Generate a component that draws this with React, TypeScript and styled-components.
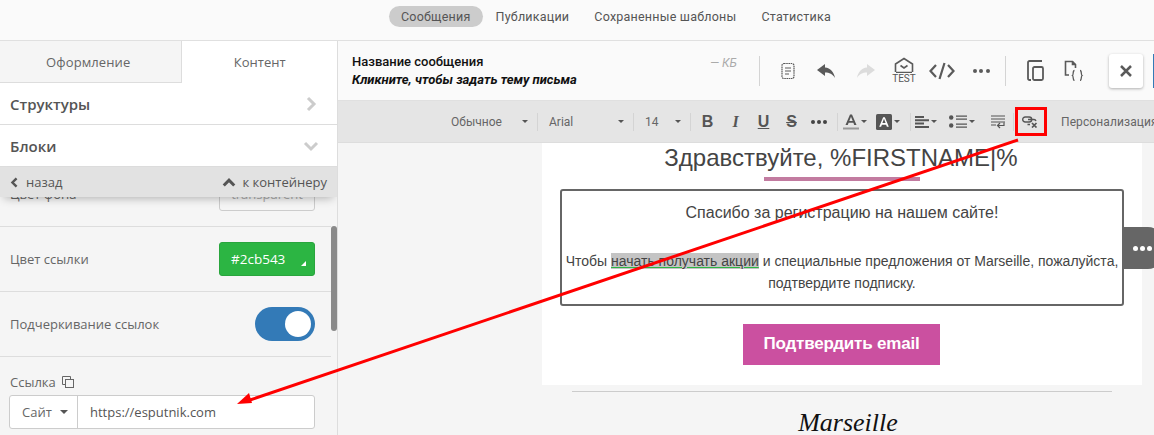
import React from "react";
import styled, { createGlobalStyle } from "styled-components";

const Global = createGlobalStyle`
  html, body { margin: 0; padding: 0; height: 100%; overflow: hidden; background: #fafafa; }
  #root { height: 435px; }
  * { box-sizing: border-box; }
`;

const Page = styled.div`
  position: relative;
  width: 1154px;
  height: 435px;
  overflow: hidden;
  display: flex;
  flex-direction: column;
  font-family: "Open Sans", sans-serif;
  color: #555;
`;

const Nav = styled.nav`
  height: 41px;
  flex: none;
  display: flex;
  align-items: flex-start;
  padding: 6px 0 0 389px;
  gap: 1px;
  background: #fafafa;
  border-bottom: 1px solid #e0e0e0;
  font-family: Roboto, sans-serif;
  font-size: 12.5px;
`;

const NavItem = styled.div<{ $active?: boolean }>`
  height: 21px;
  line-height: 21px;
  padding: 0 12px;
  border-radius: 11px;
  color: #555;
  letter-spacing: 0.22px;
  background: ${(p) => (p.$active ? "#cccccc" : "transparent")};
`;

const Main = styled.div`
  flex: 1;
  min-height: 0;
  display: flex;
`;

const Sidebar = styled.aside`
  position: relative;
  width: 338px;
  flex: none;
  display: flex;
  flex-direction: column;
  overflow: hidden;
  background: #f5f5f5;
  border-right: 1px solid #ddd;
`;

const Tabs = styled.div`
  height: 42px;
  flex: none;
  display: flex;
  background: #fff;
`;

const Tab = styled.div<{ $active?: boolean }>`
  width: ${(p) => (p.$active ? "155px" : "183px")};
  display: flex;
  align-items: center;
  justify-content: center;
  font-size: 13px;
  color: #666;
  background: ${(p) => (p.$active ? "#fff" : "#f5f5f5")};
  ${(p) => !p.$active && "border-right: 1px solid #ddd; border-bottom: 1px solid #ddd; padding-right: 5px; letter-spacing: 0.1px;"}
`;

const Section = styled.div`
  height: 42px;
  flex: none;
  display: flex;
  align-items: center;
  justify-content: space-between;
  padding: 0 18px 0 10px;
  background: #fff;
  border-bottom: 1px solid #ddd;
  font-size: 15px;
  font-weight: 600;
  color: #555;
`;

const BackBar = styled.div`
  position: relative;
  z-index: 2;
  height: 30px;
  flex: none;
  display: flex;
  align-items: center;
  justify-content: space-between;
  padding: 0 10px 0 9px;
  background: #e2e2e2;
  font-size: 13px;
  color: #555;
  box-shadow: 0 5px 10px -4px rgba(0, 0, 0, 0.3);
`;

const BackLink = styled.span`
  display: inline-flex;
  align-items: center;
  gap: 6px;
`;

const Scroll = styled.div`
  flex: 1;
  min-height: 0;
  overflow: hidden;
`;

const Row = styled.div<{ $clipped?: boolean }>`
  height: 65px;
  display: flex;
  align-items: center;
  justify-content: space-between;
  padding: 0 16px 0 10px;
  width: 331px;
  border-bottom: 1px solid #ddd;
  font-size: 13px;
  color: #666;
  ${(p) => p.$clipped && "margin-top: -35px;"}
`;

const GhostSwatch = styled.div`
  width: 96px;
  height: 34px;
  border: 1px solid #ccc;
  border-radius: 3px;
  font-size: 13px;
  color: #aaa;
  text-align: center;
  line-height: 32px;
`;

const Swatch = styled.div`
  position: relative;
  width: 96px;
  height: 34px;
  padding-left: 11px;
  background: #2cb543;
  border: 1px solid #29a53d;
  border-radius: 3px;
  color: #fff;
  font-size: 13.5px;
  font-weight: 500;
  line-height: 32px;
  &::after {
    content: "";
    position: absolute;
    right: 8px;
    bottom: 9px;
    border-style: solid;
    border-width: 0 0 5px 5px;
    border-color: transparent transparent #fff transparent;
  }
`;

const Toggle = styled.div`
  width: 60px;
  height: 34px;
  padding: 4px;
  display: flex;
  justify-content: flex-end;
  border-radius: 17px;
  background: #337ab7;
`;

const Knob = styled.div`
  width: 26px;
  height: 26px;
  border-radius: 50%;
  background: #fff;
`;

const LinkBlock = styled.div`
  padding: 16px 0 0 9px;
  font-size: 13px;
  color: #666;
`;

const LinkLabel = styled.div`
  display: flex;
  align-items: center;
  gap: 5px;
  height: 18px;
  margin: 0 0 4px 1px;
`;

const InputGroup = styled.div`
  width: 306px;
  height: 34px;
  display: flex;
  background: #fff;
  border: 1px solid #ccc;
  border-radius: 3px;
  font-size: 13px;
`;

const SiteSelect = styled.div`
  width: 68px;
  flex: none;
  display: flex;
  align-items: center;
  gap: 8px;
  padding-left: 12px;
  border-right: 1px solid #ccc;
  color: #666;
`;

const UrlText = styled.div`
  padding-left: 12px;
  line-height: 32px;
  color: #555;
`;

const Caret = styled.span<{ $color?: string; $size?: number }>`
  display: inline-block;
  flex: none;
  border-style: solid;
  border-width: ${(p) => p.$size ?? 3}px ${(p) => p.$size ?? 3}px 0;
  border-color: ${(p) => p.$color ?? "#555"} transparent transparent;
`;

const Thumb = styled.div`
  position: absolute;
  right: 0;
  top: 185px;
  width: 6px;
  height: 105px;
  border-radius: 3px;
  background: #8a8a8a;
`;

const Editor = styled.section`
  flex: 1;
  min-width: 0;
  display: flex;
  flex-direction: column;
`;

const Header = styled.div`
  height: 60px;
  flex: none;
  display: flex;
  align-items: center;
  background: #fafafa;
  border-bottom: 1px solid #e0e0e0;
  padding-left: 14px;
  font-family: Roboto, sans-serif;
`;

const TitleCol = styled.div`
  width: 385px;
  flex: none;
  font-size: 13px;
  line-height: 18px;
  font-weight: 500;
  color: #111;
`;

const Subject = styled.div`
  font-style: italic;
  font-weight: 700;
`;

const Kb = styled.div`
  width: 42px;
  margin: 0 0 15px -42px;
  flex: none;
  font-size: 12px;
  font-style: italic;
  text-align: right;
  color: #aaa;
`;

const HeaderIcons = styled.div`
  margin-left: 22px;
  display: flex;
  align-items: center;
  height: 30px;
`;

const VSep = styled.div<{ $h?: number; $m?: string }>`
  width: 1px;
  height: ${(p) => p.$h ?? 30}px;
  flex: none;
  margin: ${(p) => p.$m ?? "0"};
  background: #d4d4d4;
`;

const HIcon = styled.div<{ $w: number }>`
  width: ${(p) => p.$w}px;
  height: 30px;
  flex: none;
  display: flex;
  align-items: center;
  justify-content: center;
`;

const CloseButton = styled.div`
  width: 34px;
  height: 34px;
  margin-left: 25px;
  flex: none;
  display: flex;
  align-items: center;
  justify-content: center;
  background: #fff;
  border-radius: 3px;
  box-shadow: 0 1px 3px rgba(0, 0, 0, 0.3);
`;

const BlueEdge = styled.div`
  width: 10px;
  height: 34px;
  margin-left: 10px;
  flex: none;
  background: #337ab7;
`;

const Toolbar = styled.div`
  height: 42px;
  flex: none;
  display: flex;
  align-items: center;
  padding-left: 113px;
  background: #e5e5e5;
  border-bottom: 1px solid #ddd;
  font-family: Roboto, sans-serif;
  font-size: 12px;
  color: #666;
  white-space: nowrap;
  overflow: hidden;
`;

const Drop = styled.div<{ $w: number }>`
  width: ${(p) => p.$w}px;
  flex: none;
  display: flex;
  align-items: center;
  justify-content: space-between;
  padding-right: 9px;
`;

const TIcon = styled.div<{ $w: number }>`
  width: ${(p) => p.$w}px;
  height: 20px;
  flex: none;
  display: flex;
  align-items: center;
  justify-content: center;
  gap: 2px;
`;

const Personal = styled.div`
  margin-left: 15px;
  font-size: 12px;
  letter-spacing: 0.1px;
  color: #666;
`;

const Canvas = styled.div`
  flex: 1;
  min-height: 0;
  overflow: hidden;
  position: relative;
  background: #f5f5f5;
  padding-left: 204px;
  font-family: "Liberation Sans", Arial, sans-serif;
`;

const Letter = styled.div`
  width: 600px;
  height: 242px;
  background: #fff;
  display: flex;
  flex-direction: column;
  align-items: flex-start;
`;

const Greeting = styled.div`
  width: 600px;
  height: 30px;
  line-height: 30px;
  text-align: center;
  padding-right: 2px;
  font-size: 24px;
  color: #444;
`;

const Bar = styled.div`
  width: 156px;
  height: 4px;
  margin: 4px 0 8px 222px;
  background: #c27ba0;
`;

const NoteBox = styled.div`
  width: 564px;
  height: 117px;
  margin-left: 18px;
  padding-top: 11px;
  border: 2px solid #666;
  border-radius: 3px;
  text-align: center;
  color: #444;
`;

const Thanks = styled.div`
  font-size: 16px;
  line-height: 22px;
  margin-bottom: 26px;
`;

const Body = styled.div`
  font-size: 14px;
  line-height: 22px;
  white-space: nowrap;
`;

const Selected = styled.span`
  background: #c4c4c4;
  text-decoration: underline;
  text-decoration-color: #2cb543;
`;

const Confirm = styled.div`
  width: 197px;
  height: 41px;
  margin: 18px 0 0 201px;
  background: #cb50a0;
  color: #fff;
  font-size: 17px;
  font-weight: 700;
  text-align: center;
  line-height: 40px;
  letter-spacing: -0.2px;
`;

const Handle = styled.div`
  position: absolute;
  left: 784px;
  top: 84px;
  width: 40px;
  height: 42px;
  border-radius: 0 14px 14px 0;
  background: #666;
  display: flex;
  align-items: center;
  justify-content: center;
  padding-left: 0;
`;

const Dot = styled.span<{ $c?: string; $s?: number }>`
  width: ${(p) => p.$s ?? 4}px;
  height: ${(p) => p.$s ?? 4}px;
  border-radius: 50%;
  flex: none;
  background: ${(p) => p.$c ?? "#fff"};
`;

const Divider = styled.div`
  width: 540px;
  height: 1px;
  margin: 6px 0 0 30px;
  background: #ccc;
`;

const Brand = styled.div`
  width: 600px;
  margin-top: 13px;
  padding-left: 12px;
  text-align: center;
  font-family: "Liberation Serif", serif;
  font-style: italic;
  font-size: 26px;
  line-height: 36px;
  color: #111;
`;

const Overlay = styled.svg`
  position: absolute;
  left: 0;
  top: 0;
  pointer-events: none;
`;

const G = "#5a5a5a";

const Chevron = ({ d, c = "#ccc", w = 3, size = 16 }: { d: string; c?: string; w?: number; size?: number }) => (
  <svg width={size} height={size} viewBox="0 0 16 16"><path d={d} fill="none" stroke={c} strokeWidth={w} /></svg>
);

const CopyMini = () => (
  <svg width="14" height="14" viewBox="0 0 14 14" fill="none" stroke="#666">
    <path d="M4.500 9.500h-3v-8h8v3" /><rect x="4.500" y="4.500" width="8" height="8" />
  </svg>
);

const Notes = () => (
  <svg width="14" height="18" viewBox="0 0 14 18" fill="none" stroke={G} strokeWidth="1.2">
    <rect x="1" y="1.500" width="12" height="15" rx="2" strokeDasharray="1.6 .6" />
    <path d="M4 6h6M4 9h6M4 12h4" />
  </svg>
);

const UndoSvg = styled.svg<{ $flip?: boolean }>`
  transform: ${(p) => (p.$flip ? "scaleX(-1)" : "none")};
`;

const Undo = ({ c = G, flip }: { c?: string; flip?: boolean }) => (
  <UndoSvg $flip={flip} width="19" height="14" viewBox="0 0 19 14">
    <path d="M8 0 0 6l8 6V8.500c4.500 0 7.500 1.500 10 5.500C17 8 13.500 4 8 3.500z" fill={c} />
  </UndoSvg>
);

const TestWrap = styled.div`
  width: 24px;
  height: 27px;
  position: relative;
`;

const TestLabel = styled.span`
  position: absolute;
  left: 0;
  right: 0;
  bottom: 0;
  text-align: center;
  font: 10px/10px Roboto, sans-serif;
  color: #555;
`;

const TestIcon = () => (
  <TestWrap>
    <svg width="24" height="16" viewBox="0 0 24 16" fill="none" stroke={G} strokeWidth="1.600">
      <path d="M4 15.500h16M3.500 15V7L12 1.500 20.500 7v8" /><path d="M8.500 8.500 12 11l3.500-2.500" />
    </svg>
    <TestLabel>TEST</TestLabel>
  </TestWrap>
);

const CodeIcon = () => (
  <svg width="26" height="18" viewBox="0 0 26 18" fill="none" stroke={G} strokeWidth="2.200">
    <path d="M7 3 1.500 9 7 15M19 3l5.500 6-5.500 6M15.500 1l-5 16" />
  </svg>
);

const DotRow = styled.span<{ $g: number }>`
  display: inline-flex;
  gap: ${(p) => p.$g}px;
`;

const Dots3 = ({ c = G, s = 4, g = 2.5 }: { c?: string; s?: number; g?: number }) => (
  <DotRow $g={g}><Dot $c={c} $s={s} /><Dot $c={c} $s={s} /><Dot $c={c} $s={s} /></DotRow>
);

const CopyPage = () => (
  <svg width="17" height="21" viewBox="0 0 17 21" fill="none" stroke={G} strokeWidth="1.800">
    <path d="M4 20H2.500A1.500 1.500 0 0 1 1 18.500V2.500A1.500 1.500 0 0 1 2.500 1h12.500" />
    <rect x="6" y="7" width="10" height="13" rx="1.500" />
  </svg>
);

const DocJson = () => (
  <svg width="20" height="21" viewBox="0 0 20 21" fill="none" stroke={G} strokeWidth="1.600">
    <path d="M5 15H1.500V1.500h7l3 3V8" />
    <path d="M8.500 1.500v3h3" fill={G} />
    <path d="M10.500 10.500c-2 0-.8 4.300-2 5 1.200.7 0 5 2 5M16 10.500c2 0 .8 4.300 2 5-1.200.7 0 5-2 5" strokeWidth="1.300" />
  </svg>
);

const CloseX = () => (
  <svg width="12" height="12" viewBox="0 0 12 12"><path d="M1 1l10 10M11 1 1 11" stroke={G} strokeWidth="2.500" /></svg>
);

const ToolLetter = styled.span<{ $it?: boolean; $u?: boolean; $s?: boolean }>`
  font-family: ${(p) => (p.$it ? '"Liberation Serif", serif' : '"Liberation Sans", sans-serif')};
  font-size: 16px;
  font-weight: 700;
  font-style: ${(p) => (p.$it ? "italic" : "normal")};
  text-decoration: ${(p) => (p.$u ? "underline" : p.$s ? "line-through" : "none")};
  color: #555;
`;

const ColorA = () => (
  <svg width="16" height="17" viewBox="0 0 16 17">
    <path d="M2.500 12 7 1.500h2L13.500 12h-2.300l-.8-2.200H5.600L4.800 12zM6.300 8h3.400L8 3.700z" fill="#555" />
    <rect x="0" y="14.500" width="16" height="2" fill="#999" />
  </svg>
);

const BgA = () => (
  <svg width="16" height="16" viewBox="0 0 15 15">
    <rect width="15" height="15" rx="1.500" fill="#555" />
    <path d="M3 12 6.700 3h1.600L12 12h-1.800l-.7-2H5.500l-.7 2zM6 8.500h3L7.500 4.500z" fill="#fff" />
  </svg>
);

const Align = () => (
  <svg width="14" height="12" viewBox="0 0 14 12" fill="#555"><path d="M0 0h9v2H0zM0 3.300h14v2H0zM0 6.600h9v2H0zM0 10h14v2H0z" /></svg>
);

const ListI = () => (
  <svg width="18" height="13" viewBox="0 0 18 13" fill="#555">
    <circle cx="2.200" cy="2.500" r="2.200" /><circle cx="2.200" cy="10.500" r="2.200" />
    <path d="M7 .5h11v1.300H7zM7 3.500h11v1.300H7zM7 8.500h11v1.300H7zM7 11.500h11v1.300H7z" />
  </svg>
);

const Wrap = () => (
  <svg width="14" height="14" viewBox="0 0 14 14" fill="none" stroke="#555" strokeWidth="1.200">
    <path d="M0 1h14M0 4h14M0 7h14M0 10h5" /><path d="M13 7.500v3H7M9 8 6.500 10.500 9 13" />
  </svg>
);

const LinkOff = () => (
  <svg width="16" height="12" viewBox="0 0 16 12" fill="none" stroke="#555" strokeWidth="1.400">
    <rect x=".7" y="1" width="9" height="5" rx="2.500" />
    <path d="M6 3.500h6a2.500 2.500 0 0 1 2 1.500M8 8.500H5.500" />
    <path d="M10 7l4.500 4.500M14.500 7 10 11.500" strokeWidth="1.700" />
  </svg>
);

export default function App() {
  return (
    <Page>
      <Global />
      <Nav>
        <NavItem $active>Сообщения</NavItem>
        <NavItem>Публикации</NavItem>
        <NavItem>Сохраненные шаблоны</NavItem>
        <NavItem>Статистика</NavItem>
      </Nav>
      <Main>
        <Sidebar>
          <Tabs>
            <Tab>Оформление</Tab>
            <Tab $active>Контент</Tab>
          </Tabs>
          <Section>Структуры<Chevron d="M5 2l6 6-6 6" /></Section>
          <Section>Блоки<Chevron d="M2 5l6 6 6-6" /></Section>
          <BackBar>
            <BackLink><Chevron d="M11 2 5 8l6 6" c="#555" w={3.5} size={11} />назад</BackLink>
            <BackLink><Chevron d="M2 12l6-6 6 6" c="#555" w={3.5} size={14} />к контейнеру</BackLink>
          </BackBar>
          <Scroll>
            <Row $clipped>Цвет фона<GhostSwatch>transparent</GhostSwatch></Row>
            <Row>Цвет ссылки<Swatch>#2cb543</Swatch></Row>
            <Row>Подчеркивание ссылок<Toggle><Knob /></Toggle></Row>
            <LinkBlock>
              <LinkLabel>Ссылка <CopyMini /></LinkLabel>
              <InputGroup>
                <SiteSelect>Сайт <Caret $size={4} /></SiteSelect>
                <UrlText>https://esputnik.com</UrlText>
              </InputGroup>
            </LinkBlock>
          </Scroll>
          <Thumb />
        </Sidebar>
        <Editor>
          <Header>
            <TitleCol>
              <div>Название сообщения</div>
              <Subject>Кликните, чтобы задать тему письма</Subject>
            </TitleCol>
            <Kb>— КБ</Kb>
            <HeaderIcons>
              <VSep />
              <HIcon $w={55}><Notes /></HIcon>
              <HIcon $w={22}><Undo /></HIcon>
              <HIcon $w={56}><Undo c="#dcdcdc" flip /></HIcon>
              <HIcon $w={22}><TestIcon /></HIcon>
              <HIcon $w={54}><CodeIcon /></HIcon>
              <HIcon $w={24}><Dots3 /></HIcon>
              <VSep $m="0 0 0 12px" />
              <HIcon $w={58}><CopyPage /></HIcon>
              <HIcon $w={20}><DocJson /></HIcon>
            </HeaderIcons>
            <CloseButton><CloseX /></CloseButton>
            <BlueEdge />
          </Header>
          <Toolbar>
            <Drop $w={86}>Обычное<Caret /></Drop>
            <VSep $h={18} $m="0 11px 0 0" />
            <Drop $w={84}>Arial<Caret /></Drop>
            <VSep $h={18} $m="0 11px 0 0" />
            <Drop $w={45}>14<Caret /></Drop>
            <VSep $h={18} />
            <TIcon $w={33}><ToolLetter>B</ToolLetter></TIcon>
            <TIcon $w={23}><ToolLetter $it>I</ToolLetter></TIcon>
            <TIcon $w={33}><ToolLetter $u>U</ToolLetter></TIcon>
            <TIcon $w={23}><ToolLetter $s>S</ToolLetter></TIcon>
            <TIcon $w={32}><Dots3 c="#444" s={4} g={2} /></TIcon>
            <VSep $h={18} $m="0 0 0 2px" />
            <TIcon $w={34}><ColorA /><Caret /></TIcon>
            <TIcon $w={32}><BgA /><Caret /></TIcon>
            <VSep $h={18} $m="0 0 0 6px" />
            <TIcon $w={30}><Align /><Caret /></TIcon>
            <TIcon $w={42}><ListI /><Caret /></TIcon>
            <TIcon $w={30}><Wrap /></TIcon>
            <VSep $h={18} />
            <TIcon $w={32}><LinkOff /></TIcon>
            <Personal>Персонализация</Personal>
          </Toolbar>
          <Canvas>
            <Letter>
              <Greeting>Здравствуйте, %FIRSTNAME|%</Greeting>
              <Bar />
              <NoteBox>
                <Thanks>Спасибо за регистрацию на нашем сайте!</Thanks>
                <Body>Чтобы <Selected>начать получать акции</Selected> и специальные предложения от Marseille, пожалуйста,</Body>
                <Body>подтвердите подписку.</Body>
              </NoteBox>
              <Confirm>Подтвердить email</Confirm>
            </Letter>
            <Handle><Dots3 c="#fff" s={5} g={2} /></Handle>
            <Divider />
            <Brand>Marseille</Brand>
          </Canvas>
        </Editor>
      </Main>
      <Overlay width="1154" height="435" viewBox="0 0 1154 435">
        <rect x="1016.500" y="108.500" width="29" height="26" fill="none" stroke="#f00" strokeWidth="3" />
        <path d="M1018 140 250 400" stroke="#f00" strokeWidth="3" fill="none" />
        <path d="M237 404 249 393 252 403z" fill="#f00" />
      </Overlay>
    </Page>
  );
}
